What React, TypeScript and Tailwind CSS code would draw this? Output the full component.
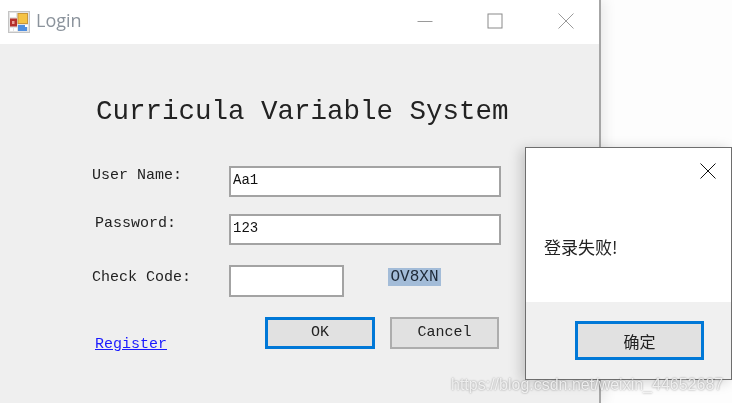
const mono = "font-['Liberation_Mono','Noto_Sans_CJK_SC',monospace]";

function AppIcon() {
  return (
    <svg width="22" height="22" viewBox="0 0 22 22" className="shrink-0">
      <rect x="0.5" y="0.5" width="21" height="21" fill="#e4e4e4" stroke="#c4c4c4" />
      <rect x="2" y="2" width="6" height="4" fill="#fff" />
      <rect x="2" y="17" width="3" height="3" fill="#fff" />
      <rect x="6" y="17" width="3" height="3" fill="#fff" />
      <rect x="2" y="7.5" width="7" height="8" fill="#b5302c" />
      <rect x="4" y="10" width="2.5" height="3" fill="#e9a09a" />
      <rect x="10" y="2.5" width="9.5" height="10" fill="#f5c344" stroke="#c8963a" />
      <rect x="10" y="14" width="9" height="6" fill="#4f8ee0" />
      <rect x="17" y="14" width="3" height="2" fill="#fff" />
    </svg>
  );
}

function WindowControls() {
  return (
    <div className="ml-auto flex -translate-y-[1px] items-center">
      <svg width="16" height="16" viewBox="0 0 16 16" className="mr-[54px]">
        <path d="M0.5 8.5H15.5" stroke="#9a9a9a" />
      </svg>
      <svg width="16" height="16" viewBox="0 0 16 16" className="mr-[55px]">
        <rect x="1" y="1" width="14" height="14" fill="none" stroke="#8a8a8a" />
      </svg>
      <svg width="16" height="16" viewBox="0 0 16 16" className="mr-[25px]">
        <path d="M0.5 0.5L15.5 15.5M15.5 0.5L0.5 15.5" stroke="#9a9a9a" />
      </svg>
    </div>
  );
}

function TextBox({ value, width }: { value?: string; width: string }) {
  return (
    <div className={`${width} h-[31px] border-2 border-[#a3a3a3] bg-white pl-[2px] text-[14px] leading-[25px] text-[#111] ${mono}`}>
      {value}
    </div>
  );
}

function FormRow({ label, inset, children, className }: { label: string; inset: string; children: React.ReactNode; className: string }) {
  return (
    <div className={`flex pl-[92px] ${className}`}>
      <div className={`w-[137px] ${inset} text-[15px] leading-[18px] text-[#222] ${mono}`}>{label}</div>
      {children}
    </div>
  );
}

export default function App() {
  return (
    <div className="relative h-[403px] w-[732px] overflow-hidden bg-[#fdfdfd] blur-[0.35px]">
      {/* Login window */}
      <div className="flex h-full w-[601px] flex-col border-r-2 border-[#a6a6a6] bg-[#efefef] shadow-[4px_0_12px_rgba(0,0,0,0.08)]">
        <div className="flex h-[44px] items-center bg-white pl-[8px]">
          <AppIcon />
          <span className="ml-[6px] -translate-y-[2px] font-['Open_Sans',sans-serif] text-[18px] text-[#8b939c]">Login</span>
          <WindowControls />
        </div>

        <h1 className={`ml-[96px] mt-[52px] h-[32px] text-[27.5px] font-normal leading-[32px] whitespace-nowrap text-[#222] ${mono}`}>
          Curricula Variable System
        </h1>

        <FormRow label="User Name:" inset="pt-[1px]" className="mt-[38px]">
          <TextBox value="Aa1" width="w-[272px]" />
        </FormRow>
        <FormRow label="Password:" inset="pl-[3px] pt-[1px]" className="mt-[17px]">
          <TextBox value="123" width="w-[272px]" />
        </FormRow>
        <FormRow label="Check Code:" inset="mt-[3px] pt-[1px]" className="mt-[20px]">
          <TextBox width="w-[115px] h-[32px]" />
          <span className={`ml-[44px] mt-[3px] h-[18px] w-[53px] bg-[#a3bcd8] text-center text-[16px] leading-[18px] text-[#1f2a38] ${mono}`}>
            OV8XN
          </span>
        </FormRow>

        <div className="mt-[20px] flex pl-[95px]">
          <a className={`mt-[19px] h-[18px] w-[170px] text-[15px] leading-[18px] text-[#1a1aff] underline ${mono}`}>Register</a>
          <button className={`h-[32px] w-[110px] border-[3px] border-[#0078d7] bg-[#e1e1e1] pt-[1px] text-[15px] text-[#222] ${mono}`}>OK</button>
          <button className={`ml-[15px] h-[32px] w-[109px] border-2 border-[#adadad] bg-[#e1e1e1] pt-[1px] text-[15px] text-[#222] ${mono}`}>Cancel</button>
        </div>
      </div>

      {/* Message box */}
      <div className="absolute left-[525px] top-[147px] flex h-[233px] w-[207px] flex-col border border-[#6e6e6e] bg-white shadow-[-4px_2px_12px_rgba(0,0,0,0.18)]">
        <div className="flex justify-end pr-[15px] pt-[15px]">
          <svg width="16" height="16" viewBox="0 0 16 16">
            <path d="M0.5 0.5L15.5 15.5M15.5 0.5L0.5 15.5" stroke="#111" />
          </svg>
        </div>
        <p className="ml-[18px] mt-[57px] font-['Noto_Sans_CJK_SC',sans-serif] text-[17px] leading-[22px] text-[#222]">登录失败!</p>
        <div className="mt-[44px] flex flex-1 items-start bg-[#f0f0f0] pl-[49px] pt-[19px]">
          <button className="h-[39px] w-[129px] border-[3px] border-[#0078d7] bg-[#e1e1e1] font-['Noto_Sans_CJK_SC',sans-serif] text-[16px] text-[#222]">
            确定
          </button>
        </div>
      </div>

      {/* Blog watermark */}
      <span className="absolute left-[451px] top-[376px] font-['Liberation_Sans',sans-serif] text-[16px] leading-[18px] whitespace-nowrap text-white/80 [text-shadow:0_0_2px_rgba(0,0,0,0.45)]">
        https://blog.csdn.net/weixin_44652687
      </span>
    </div>
  );
}
